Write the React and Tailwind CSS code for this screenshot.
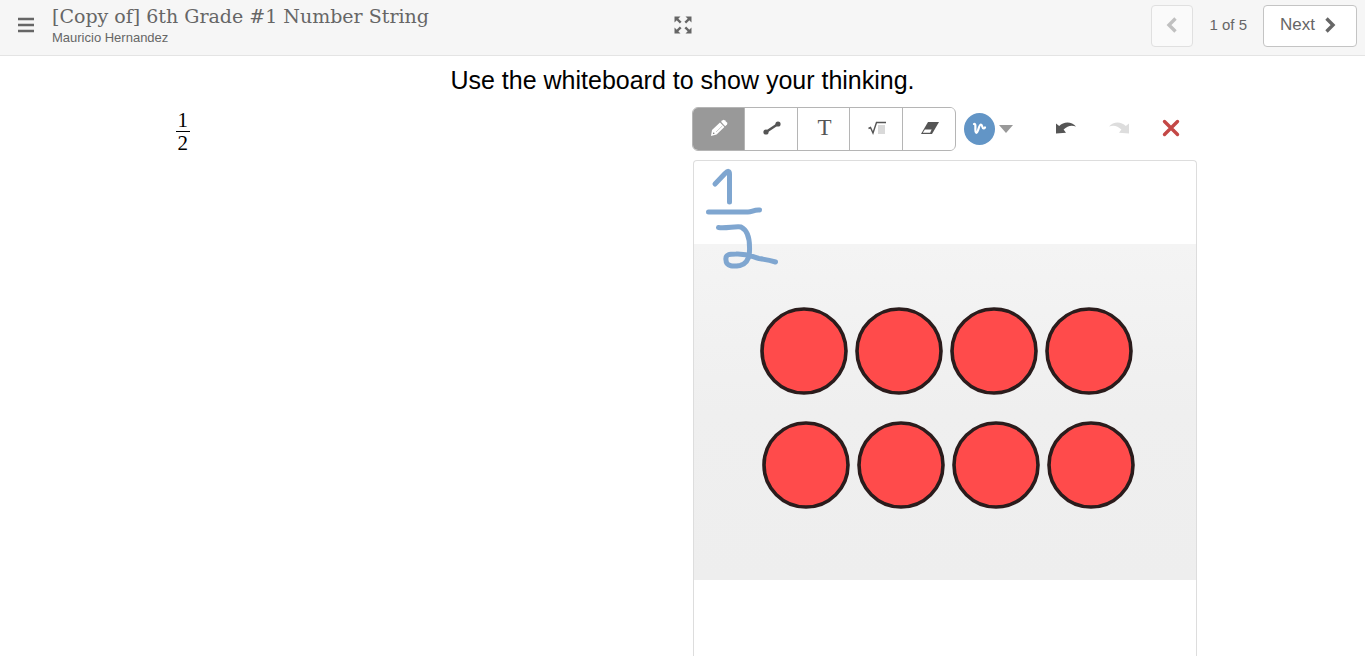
import React, { useState } from 'react';

const PencilIcon = () => (
  <svg width="18" height="18" viewBox="0 0 18 18" fill="currentColor">
    <path d="M2 11 L10 3.6 L14.4 8 L6.6 15.6 L1 17 Z" />
    <path d="M11 2.8 L12.6 1.2 Q13.6 0.4 14.6 1.2 L17 3.6 Q17.8 4.6 17 5.6 L15.2 7.2 Z" />
    <path d="M6 13 L12.4 6.8" stroke="#aaaaaa" strokeWidth="0.6" />
    <circle cx="3.7" cy="14.3" r="0.8" fill="#777777" />
  </svg>
);

const LineIcon = () => (
  <svg width="18" height="14" viewBox="0 0 18 14" fill="currentColor">
    <path d="M3 11 L15 3" stroke="currentColor" strokeWidth="2.4" />
    <circle cx="3" cy="11" r="2.6" />
    <circle cx="15" cy="3" r="2.6" />
  </svg>
);

const MathIcon = () => (
  <svg width="18" height="14" viewBox="0 0 18 14">
    <rect x="10" y="4" width="7" height="9" fill="#d9d9d9" />
    <path d="M0.5 7.5 L2.5 6.5 L5 12 L8.5 1.5 L18 1.5" fill="none" stroke="currentColor" strokeWidth="1.4" />
  </svg>
);

const EraserIcon = () => (
  <svg width="20" height="14" viewBox="0 0 20 14">
    <path d="M8 1 L19 1 L12 13 L1 13 Z" fill="currentColor" />
    <path d="M4.9 8.4 L11.6 8.4 L10.2 11.8 L2.8 11.8 Z" fill="white" />
  </svg>
);

const UndoIcon = () => (
  <svg width="20" height="12" viewBox="0 0 20 12" fill="currentColor">
    <path d="M0 1.5 L3.2 4 C7.5 -0.6 15.5 -1 20 4.5 C15.5 2.8 11.4 3.6 7.6 7.6 L10 10.8 L0 11.5 Z" />
  </svg>
);

const FullscreenIcon = () => (
  <svg width="18" height="18" viewBox="0 0 18 18" fill="currentColor" stroke="currentColor">
    {[0, 90, 180, 270].map((angle) => (
      <g key={angle} transform={`rotate(${angle} 9 9)`}>
        <path d="M0.5 0.5 H6.5 L0.5 6.5 Z" stroke="none" />
        <path d="M2.5 2.5 L6.7 6.7" strokeWidth="2.4" />
      </g>
    ))}
  </svg>
);

const Chevron = ({ left }) => (
  <svg width="11" height="16" viewBox="0 0 11 16" fill="none" stroke="currentColor" strokeWidth="3.4">
    <path d={left ? 'M9.5 1.5 L3 8 L9.5 14.5' : 'M1.5 1.5 L8 8 L1.5 14.5'} />
  </svg>
);

const tools = [
  { id: 'pencil', label: 'Pencil', icon: <PencilIcon /> },
  { id: 'line', label: 'Line', icon: <LineIcon /> },
  { id: 'text', label: 'Text', icon: <span className="font-['Liberation_Serif',serif] text-[23px] leading-6">T</span> },
  { id: 'math', label: 'Math', icon: <MathIcon /> },
  { id: 'eraser', label: 'Eraser', icon: <EraserIcon /> },
];

const counters = [
  [110, 190], [205, 190], [300, 190], [395, 190],
  [112, 304], [207, 304], [302, 304], [397, 304],
];

const Header = () => (
  <header className="flex h-14 items-center border-b border-[#e4e4e4] bg-[#f6f6f6] text-[#666666]">
    <div className="flex flex-1 items-center">
      <button aria-label="Menu" className="ml-4 flex h-10 w-5 items-center justify-center pb-[6px]">
        <svg width="18" height="16" viewBox="0 0 18 16" stroke="currentColor" strokeWidth="2.6">
          <path d="M1 2 H17 M1 8 H17 M1 14 H17" />
        </svg>
      </button>
      <div className="ml-4 pb-1">
        <h1 className="font-['DejaVu_Serif',serif] text-[19px] leading-6">[Copy of] 6th Grade #1 Number String</h1>
        <p className="text-[13px] leading-5">Mauricio Hernandez</p>
      </div>
    </div>
    <button aria-label="Full screen" className="pb-[6px]">
      <FullscreenIcon />
    </button>
    <nav className="flex flex-1 items-center justify-end gap-4 pb-1 text-[17px]">
      <button aria-label="Previous" disabled className="flex h-[42px] w-[42px] items-center justify-center rounded-sm border border-[#e0e0e0] bg-[#fafafa] pr-[2px] pb-[2px] text-[#c0c0c0]">
        <Chevron left />
      </button>
      <span className="text-[15px]">1 of 5</span>
      <button className="mr-2 flex h-[42px] w-[94px] items-center gap-[10px] rounded-sm border border-[#c4c4c4] bg-white pb-[2px] pl-4">
        Next
        <Chevron />
      </button>
    </nav>
  </header>
);

const Toolbar = ({ tool, setTool }) => (
  <div className="-ml-px flex h-11 items-center text-[#555555]">
    <div className="flex h-11 w-[264px] overflow-hidden rounded-md border border-[#b5b5b5]">
      {tools.map(({ id, label, icon }) => (
        <button
          key={id}
          aria-label={label}
          onClick={() => setTool(id)}
          className={`flex flex-1 items-center justify-center border-r border-[#b5b5b5] pb-[2px] pl-[2px] last:border-r-0 ${tool === id ? 'bg-[#999999] text-white' : 'bg-white'}`}
        >
          {icon}
        </button>
      ))}
    </div>
    <button aria-label="Pen color" className="ml-2 flex items-center gap-1">
      <svg width="31" height="32" viewBox="0 0 31 32">
        <ellipse cx="15.5" cy="16" rx="15.5" ry="16" fill="#6295c6" />
        <path d="M10 11 C12 10.5 11.2 14 11.4 17 C11.6 20.8 13 20.5 14 17.5 C15 14.5 15.5 11.5 17 11.5 C18.5 11.5 18 15.5 19.500 15.5 Q20.5 15.5 21 14.500" fill="none" stroke="white" strokeWidth="2.2" strokeLinecap="round" strokeLinejoin="round" />
      </svg>
      <svg width="14" height="8" viewBox="0 0 14 8" fill="#999999">
        <path d="M0 0 H14 L7 8 Z" />
      </svg>
    </button>
    <div className="ml-[43px] flex items-center gap-[33px] pb-[2px]">
      <button aria-label="Undo">
        <UndoIcon />
      </button>
      <button aria-label="Redo" disabled className="-scale-x-100 text-[#dddddd]">
        <UndoIcon />
      </button>
      <button aria-label="Clear" className="text-[#c44846]">
        <svg width="18" height="18" viewBox="0 0 18 18" stroke="currentColor" strokeWidth="3.4" strokeLinecap="round">
          <path d="M2.5 2.5 L15.5 15.5 M15.5 2.5 L2.5 15.5" />
        </svg>
      </button>
    </div>
  </div>
);

const Whiteboard = () => (
  <div className="flex-1 rounded-t-sm border border-b-0 border-[#dddddd]">
    <svg viewBox="0 0 502 495" className="block w-full">
      <defs>
        <linearGradient id="paper" x1="0" y1="0" x2="0" y2="1">
          <stop offset="0" stopColor="#f4f4f4" />
          <stop offset="0.5" stopColor="#efefef" />
          <stop offset="1" stopColor="#eeeeee" />
        </linearGradient>
        <filter id="soft">
          <feGaussianBlur stdDeviation="0.7" />
        </filter>
      </defs>
      <rect y="83" width="502" height="336" fill="url(#paper)" />
      <g fill="#ff4c4c" stroke="#2a1c1c" strokeWidth="3.6" filter="url(#soft)">
        {counters.map(([cx, cy]) => (
          <circle key={`${cx}-${cy}`} cx={cx} cy={cy} r="42" />
        ))}
      </g>
      <g fill="none" stroke="#7fa6d0" strokeWidth="5" strokeLinecap="round" strokeLinejoin="round">
        <path d="M21 23 L31 12.5 Q35.5 8 35.5 13 V41" />
        <path d="M14.5 51 H54 C58 51 60 48.5 65.5 49" />
        <path d="M24.5 66.5 C32 67.5 42 65 47 66 C53 69 55.5 77 55.5 86 C56 96 53 103 46 104.5 C40 105.5 32 106 32 99 C31 93 36 93 42 93 C55 92.5 58 96 65 97.5 Q75 99 81.5 101" />
      </g>
    </svg>
  </div>
);

export default function App() {
  const [tool, setTool] = useState('pencil');

  return (
    <div className="flex min-h-screen flex-col bg-white font-['Liberation_Sans',Arial,sans-serif]">
      <Header />
      <main className="mx-auto flex w-full max-w-[1028px] flex-1 flex-col">
        <h2 className="pt-2 pb-[11px] text-center text-[25px] leading-8 text-black">Use the whiteboard to show your thinking.</h2>
        <div className="flex flex-1">
          <section className="flex-1 pl-[7px]">
            <div className="inline-flex flex-col items-center pt-[2px] font-['Liberation_Serif',serif] text-[21px] leading-[22px] text-black">
              <span className="border-b border-black px-[2px]">1</span>
              <span>2</span>
            </div>
          </section>
          <section className="flex w-[504px] flex-col gap-[9px]">
            <Toolbar tool={tool} setTool={setTool} />
            <Whiteboard />
          </section>
        </div>
      </main>
    </div>
  );
}
